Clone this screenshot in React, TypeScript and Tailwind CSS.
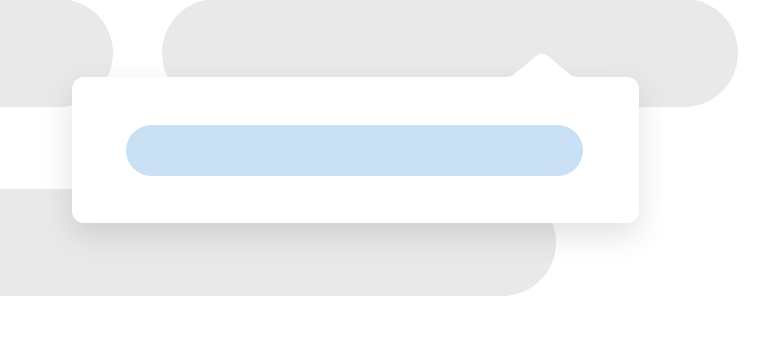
export default function App() {
    return (
        <div className="relative w-[775px] h-[339px] overflow-hidden bg-white">

            {/* background skeleton rows */}
            <div className="flex flex-col">
                <div className="flex mt-[-1px] h-[108px]">
                    <div className="ml-[-60px] w-[173px] h-full rounded-r-full bg-[#e9e9e9]" />
                    <div className="ml-[49px] w-[576px] h-full rounded-full bg-[#e9e9e9]" />
                </div>
                <div className="flex mt-[82px] h-[107px]">
                    <div className="ml-[-60px] w-[616px] h-full rounded-r-full bg-[#e9e9e9]" />
                </div>
            </div>

            {/* popover */}
            <div className="absolute left-[72px] top-[77px] w-[567px] h-[146px] rounded-xl bg-white shadow-[0_12px_32px_rgba(0,0,0,0.12)]">
                <svg className="absolute left-[432px] top-[-26px]" width="76" height="27" viewBox="0 0 76 27">
                    <path d="M0 27 L0 26 C6 26 8 25 11 22.5 L32 5 Q38 0 44 5 L65 22.5 C68 25 70 26 76 26 L76 27 Z" fill="#ffffff" />
                </svg>
                <div className="flex pl-[54px] pr-[56px] pt-[48px]">
                    <div className="flex-1 h-[51px] rounded-full bg-[#c8dff4]" />
                </div>
            </div>

        </div>
    )
}
